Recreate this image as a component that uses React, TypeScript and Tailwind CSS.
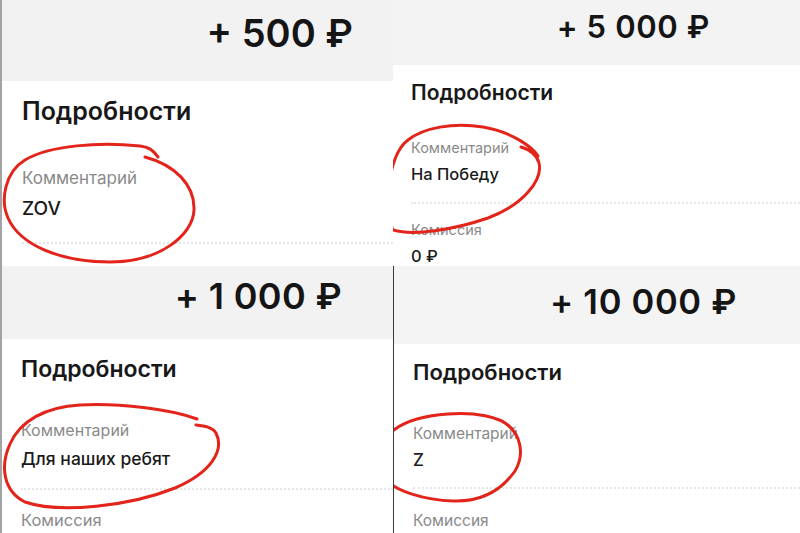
import React from "react";

type PanelData = {
  amount: string;
  comment: string;
  fee?: string;
  showFee: boolean;
  wrap: string;
  head: string;
  amountCls: string;
  body: string;
  titleCls: string;
  labelCls: string;
  valueCls: string;
  dotsCls: string;
  feeLabelCls: string;
  feeCls: string;
  circle: string;
};

const panels: PanelData[] = [
  {
    amount: "+ 500 ₽",
    comment: "ZOV",
    showFee: false,
    wrap: "border-l-2 border-[#a3a3a3]",
    head: "h-[81px] bg-[#f2f2f2] pt-[14px] pr-[40px]",
    amountCls: "text-[38px]",
    body: "pl-[20px]",
    titleCls: "mt-[18px] text-[25px]",
    labelCls: "mt-[46px] text-[17px]",
    valueCls: "mt-[12px] text-[19px]",
    dotsCls: "mt-[24px]",
    feeLabelCls: "mt-[22px] text-[17px]",
    feeCls: "mt-[10px] text-[19px]",
    circle:
      "M 156 157 C 150 149, 146 147, 138 146 C 98 142, 48 145, 23 160 C 3 172, -2 200, 6 218 C 18 245, 58 262, 108 262 C 158 262, 191 235, 192 210 C 193 185, 173 165, 143 157",
  },
  {
    amount: "+ 5 000 ₽",
    comment: "На Победу",
    fee: "0 ₽",
    showFee: true,
    wrap: "",
    head: "h-[65px] bg-[#f3f3f3] pt-[11px] pr-[90px]",
    amountCls: "text-[31px] tracking-[0.02em]",
    body: "pl-[18px]",
    titleCls: "mt-[17px] text-[21px]",
    labelCls: "mt-[38px] text-[14.5px]",
    valueCls: "mt-[10px] text-[16.5px]",
    dotsCls: "mt-[20px]",
    feeLabelCls: "mt-[19px] text-[14.5px]",
    feeCls: "mt-[10px] text-[16.5px]",
    circle:
      "M 145 156 C 140 148, 120 132, 90 127 C 60 122, 30 128, 15 140 C -5 155, -10 210, 0 230 C 20 236, 60 230, 95 218 C 130 205, 150 180, 146 163 C 144 155, 138 150, 128 147",
  },
  {
    amount: "+ 1 000 ₽",
    comment: "Для наших ребят",
    showFee: true,
    wrap: "border-l-2 border-[#a3a3a3]",
    head: "h-[73px] bg-[#f2f2f2] pt-[12px] pr-[51px]",
    amountCls: "text-[36px] tracking-[0.01em]",
    body: "pl-[19px]",
    titleCls: "mt-[19px] text-[23px]",
    labelCls: "mt-[41px] text-[16px]",
    valueCls: "mt-[12px] text-[17.5px]",
    dotsCls: "mt-[20px]",
    feeLabelCls: "mt-[22px] text-[16.5px]",
    feeCls: "mt-[10px] text-[17.5px]",
    circle:
      "M 195 153 C 168 143, 118 137, 78 139 C 43 141, 18 155, 8 178 C -2 200, 1 225, 23 236 C 58 248, 128 240, 173 222 C 208 207, 223 185, 214 167 C 210 161, 203 160, 194 159",
  },
  {
    amount: "+ 10 000 ₽",
    comment: "Z",
    showFee: true,
    wrap: "border-l border-[#3a3a3a]",
    head: "h-[78px] bg-[#f4f4f4] pt-[19px] pr-[63px]",
    amountCls: "text-[34.5px] tracking-[0.02em]",
    body: "pl-[19px]",
    titleCls: "mt-[17px] text-[22px]",
    labelCls: "mt-[43px] text-[15.5px]",
    valueCls: "mt-[10px] text-[17px]",
    dotsCls: "mt-[18px]",
    feeLabelCls: "mt-[24px] text-[15.5px]",
    feeCls: "mt-[10px] text-[17px]",
    circle:
      "M 117 162 C 107 150, 79 146, 54 148 C 24 150, 4 158, -7 170 L -7 215 C 4 225, 29 234, 59 235 C 89 236, 109 222, 121 205 C 131 188, 127 168, 111 157",
  },
];

const Panel = ({ p }: { p: PanelData }) => (
  <div className={`relative flex flex-col overflow-hidden bg-white ${p.wrap}`}>
    <div className={`flex shrink-0 items-start justify-end ${p.head}`}>
      <span className={`font-semibold leading-none text-[#151515] ${p.amountCls}`}>
        {p.amount}
      </span>
    </div>
    <div className={`flex flex-col ${p.body}`}>
      <div className={`font-semibold leading-none text-[#181818] ${p.titleCls}`}>
        Подробности
      </div>
      <div className={`leading-none text-[#8a8a8a] ${p.labelCls}`}>Комментарий</div>
      <div className={`font-medium leading-none text-[#1a1a1a] ${p.valueCls}`}>
        {p.comment}
      </div>
      <div className={`border-t-2 border-dotted border-[#e6e6e6] ${p.dotsCls}`} />
      {p.showFee && (
        <>
          <div className={`leading-none text-[#8a8a8a] ${p.feeLabelCls}`}>Комиссия</div>
          <div className={`font-medium leading-none text-[#1a1a1a] ${p.feeCls}`}>
            {p.fee ?? "0 ₽"}
          </div>
        </>
      )}
    </div>
    {/* red marker circle drawn over the screenshot */}
    <svg className="pointer-events-none absolute left-0 top-0 h-full w-full overflow-visible">
      <path
        d={p.circle}
        fill="none"
        stroke="#e3241b"
        strokeWidth={3}
        strokeLinecap="round"
        strokeLinejoin="round"
      />
    </svg>
  </div>
);

export default function App() {
  return (
    <div
      className="grid h-[533px] w-[800px] grid-cols-[393px_407px] grid-rows-[266px_267px] overflow-hidden bg-white"
      style={{ fontFamily: 'Inter, "Noto Sans", "DejaVu Sans", sans-serif' }}
    >
      {panels.map((p, i) => (
        <Panel key={i} p={p} />
      ))}
    </div>
  );
}
